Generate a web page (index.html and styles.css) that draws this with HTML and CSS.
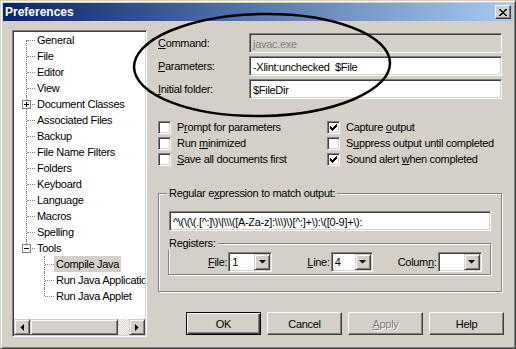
FILE: index.html
```html
<!DOCTYPE html>
<html lang="en">
<head>
    <meta charset="UTF-8">
    <title>Preferences</title>
    <link rel="stylesheet" href="styles.css">
</head>
<body>
    <div class="window">
        <div class="titlebar">
            <span class="title">Preferences</span>
            <span class="close-btn">
                <svg width="8" height="7" viewBox="0 0 8 7"><path d="M0 0h2v1h-2zM6 0h2v1h-2zM1 1h2v1h-2zM5 1h2v1h-2zM2 2h4v1h-4zM3 3h2v1h-2zM2 4h4v1h-4zM1 5h2v1h-2zM5 5h2v1h-2zM0 6h2v1h-2zM6 6h2v1h-2z" fill="#000"/></svg>
            </span>
        </div>

        <div class="main">
            <!-- category tree -->
            <div class="tree-box">
                <div class="tree-view">
                    <ul class="tree">
                        <li><span class="node">General</span></li>
                        <li><span class="node">File</span></li>
                        <li><span class="node">Editor</span></li>
                        <li><span class="node">View</span></li>
                        <li>
                            <svg class="expander" width="9" height="9" viewBox="0 0 9 9"><rect x="0.5" y="0.5" width="8" height="8" fill="#fff" stroke="#808080"/><path d="M2 4.5h5M4.5 2v5" stroke="#000"/></svg>
                            <span class="node">Document Classes</span>
                        </li>
                        <li><span class="node">Associated Files</span></li>
                        <li><span class="node">Backup</span></li>
                        <li><span class="node">File Name Filters</span></li>
                        <li><span class="node">Folders</span></li>
                        <li><span class="node">Keyboard</span></li>
                        <li><span class="node">Language</span></li>
                        <li><span class="node">Macros</span></li>
                        <li><span class="node">Spelling</span></li>
                        <li>
                            <svg class="expander" width="9" height="9" viewBox="0 0 9 9"><rect x="0.5" y="0.5" width="8" height="8" fill="#fff" stroke="#808080"/><path d="M2 4.5h5" stroke="#000"/></svg>
                            <span class="node">Tools</span>
                            <ul class="subtree">
                                <li><span class="node selected">Compile Java</span></li>
                                <li><span class="node">Run Java Application</span></li>
                                <li><span class="node">Run Java Applet</span></li>
                            </ul>
                        </li>
                    </ul>
                </div>
                <div class="hscroll">
                    <span class="sb-btn">
                        <svg width="4" height="7" viewBox="0 0 4 7"><path d="M4 0v7L0.5 3.5z" fill="#000"/></svg>
                    </span>
                    <span class="sb-thumb"></span>
                    <span class="sb-track"></span>
                    <span class="sb-btn">
                        <svg width="4" height="7" viewBox="0 0 4 7"><path d="M0 0v7L3.5 3.5z" fill="#000"/></svg>
                    </span>
                </div>
            </div>

            <!-- tool settings -->
            <div class="panel">
                <div class="form-rows">
                    <div class="form-row">
                        <span class="form-label"><u>C</u>ommand:</span>
                        <span class="field disabled">javac.exe</span>
                    </div>
                    <div class="form-row">
                        <span class="form-label"><u>P</u>arameters:</span>
                        <span class="field">-Xlint:unchecked&nbsp; $File</span>
                    </div>
                    <div class="form-row">
                        <span class="form-label"><u>I</u>nitial folder:</span>
                        <span class="field">$FileDir</span>
                    </div>
                </div>

                <div class="checks">
                    <div class="check"><span class="cb"></span><span>P<u>r</u>ompt for parameters</span></div>
                    <div class="check"><span class="cb"><svg width="7" height="7" viewBox="0 0 7 7"><path d="M6 0h1v3h-1zM5 1h1v3h-1zM4 2h1v3h-1zM3 3h1v3h-1zM2 4h1v3h-1zM1 3h1v3h-1zM0 2h1v3h-1z" fill="#000"/></svg></span><span>Capture <u>o</u>utput</span></div>
                    <div class="check"><span class="cb"></span><span>Run <u>m</u>inimized</span></div>
                    <div class="check"><span class="cb"></span><span>S<u>u</u>ppress output until completed</span></div>
                    <div class="check"><span class="cb"></span><span><u>S</u>ave all documents first</span></div>
                    <div class="check"><span class="cb"><svg width="7" height="7" viewBox="0 0 7 7"><path d="M6 0h1v3h-1zM5 1h1v3h-1zM4 2h1v3h-1zM3 3h1v3h-1zM2 4h1v3h-1zM1 3h1v3h-1zM0 2h1v3h-1z" fill="#000"/></svg></span><span>Sound alert <u>w</u>hen completed</span></div>
                </div>

                <fieldset class="group">
                    <legend>Regular e<u>x</u>pression to match output:</legend>
                    <div class="field regex">^\(\(\(.[^:]\)\|\\\([A-Za-z]:\\\)\)[^:]+\):\([0-9]+\):</div>

                    <fieldset class="group registers">
                        <legend>Registers:</legend>
                        <div class="reg-row">
                            <div class="reg reg-file">
                                <span><u>F</u>ile:</span>
                                <span class="combo"><span class="combo-val">1</span><span class="combo-btn"><svg width="7" height="4" viewBox="0 0 7 4"><path d="M0 0h7L3.5 3.5z" fill="#000"/></svg></span></span>
                            </div>
                            <div class="reg reg-line">
                                <span><u>L</u>ine:</span>
                                <span class="combo short"><span class="combo-val">4</span><span class="combo-btn"><svg width="7" height="4" viewBox="0 0 7 4"><path d="M0 0h7L3.5 3.5z" fill="#000"/></svg></span></span>
                            </div>
                            <div class="reg reg-col">
                                <span>Colum<u>n</u>:</span>
                                <span class="combo"><span class="combo-val"></span><span class="combo-btn"><svg width="7" height="4" viewBox="0 0 7 4"><path d="M0 0h7L3.5 3.5z" fill="#000"/></svg></span></span>
                            </div>
                        </div>
                    </fieldset>
                </fieldset>

                <div class="buttons">
                    <span class="btn default">OK</span>
                    <span class="btn">Cancel</span>
                    <span class="btn disabled"><u>A</u>pply</span>
                    <span class="btn">Help</span>
                </div>
            </div>
        </div>

        <!-- hand drawn highlight around the command fields -->
        <svg class="annotation" width="516" height="349" viewBox="0 0 516 349">
            <ellipse cx="261" cy="64" rx="128" ry="51" transform="rotate(-1 261 64)" fill="none" stroke="#000" stroke-width="2.5"/>
        </svg>
    </div>
</body>
</html>
```

FILE: styles.css
```css
body {
    margin: 0;
    font-family: "Liberation Sans", Arial, sans-serif;
    font-size: 11px;
    letter-spacing: -0.3px;
    color: #000;
}

u {
    text-decoration: underline;
    text-underline-offset: 1px;
}

.window {
    position: relative;
    width: 516px;
    height: 349px;
    box-sizing: border-box;
    background: #d4d0c8;
    border: 1px solid;
    border-color: #d4d0c8 #404040 #404040 #d4d0c8;
    box-shadow: inset 1px 1px #fff, inset -1px -1px #808080;
    padding: 2px;
}

/* title bar */
.titlebar {
    height: 18px;
    display: flex;
    align-items: center;
    justify-content: space-between;
    padding: 0 2px 0 2px;
    background: linear-gradient(to right, #0a246a, #a6caf0);
}

.title {
    color: #fff;
    font-weight: bold;
    font-size: 12px;
    letter-spacing: 0;
}

.close-btn {
    width: 16px;
    height: 14px;
    box-sizing: border-box;
    display: flex;
    align-items: center;
    justify-content: center;
    background: #d4d0c8;
    border: 1px solid;
    border-color: #fff #404040 #404040 #fff;
    box-shadow: inset -1px -1px #808080;
}

.main {
    display: flex;
    padding: 9px 0 0 9px;
}

/* tree */
.tree-box {
    width: 135px;
    height: 307px;
    box-sizing: border-box;
    background: #fff;
    border: 1px solid;
    border-color: #808080 #fff #fff #808080;
    box-shadow: inset 1px 1px #404040, inset -1px -1px #d4d0c8;
    padding: 1px;
    display: flex;
    flex-direction: column;
}

.tree-view {
    height: 287px;
    overflow: hidden;
}

.tree,
.subtree {
    list-style: none;
    margin: 0;
    padding: 0;
}

.tree {
    padding-left: 12px;
}

.tree li {
    position: relative;
    padding-left: 9px;
    white-space: nowrap;
}

.subtree {
    margin-left: 9px;
}

.subtree li {
    padding-left: 10px;
}

.tree li::before {
    content: "";
    position: absolute;
    left: 0;
    top: 0;
    bottom: 0;
    border-left: 1px dotted #808080;
}

.tree li:first-child::before {
    top: 8px;
}

.tree li:last-child::before {
    bottom: auto;
    height: 8px;
}

.subtree li:first-child::before {
    top: 0;
}

.tree li::after {
    content: "";
    position: absolute;
    left: 1px;
    top: 8px;
    width: 8px;
    border-top: 1px dotted #808080;
}

.subtree li::after {
    width: 9px;
}

.expander {
    position: absolute;
    left: -4px;
    top: 4px;
    z-index: 1;
}

.node {
    display: inline-block;
    height: 16px;
    line-height: 16px;
    padding: 0 2px;
}

.node.selected {
    background: #d4d0c8;
}

.hscroll {
    height: 16px;
    display: flex;
}

.sb-btn,
.sb-thumb {
    box-sizing: border-box;
    height: 16px;
    background: #d4d0c8;
    border: 1px solid;
    border-color: #d4d0c8 #404040 #404040 #d4d0c8;
    box-shadow: inset 1px 1px #fff, inset -1px -1px #808080;
}

.sb-btn {
    width: 16px;
    display: flex;
    align-items: center;
    justify-content: center;
}

.sb-thumb {
    width: 88px;
}

.sb-track {
    flex: 1;
    background: repeating-conic-gradient(#fff 0 25%, #d4d0c8 0 50%) 0 0 / 2px 2px;
}

/* right panel */
.panel {
    width: 346px;
    margin-left: 11px;
    padding-top: 3px;
}

.form-rows {
    display: flex;
    flex-direction: column;
    gap: 3px;
}

.form-row {
    display: flex;
    align-items: center;
}

.form-label {
    width: 91px;
}

.field {
    box-sizing: border-box;
    width: 253px;
    height: 20px;
    line-height: 16px;
    padding: 2px 3px;
    background: #fff;
    border: 1px solid;
    border-color: #808080 #fff #fff #808080;
    box-shadow: inset 1px 1px #404040, inset -1px -1px #d4d0c8;
    white-space: nowrap;
    overflow: hidden;
}

.field.disabled {
    background: #d4d0c8;
    color: #808080;
}

.checks {
    display: grid;
    grid-template-columns: 169px 1fr;
    grid-auto-rows: 16px;
    margin-top: 20px;
}

.check {
    display: flex;
    align-items: center;
    gap: 6px;
    white-space: nowrap;
}

.cb {
    width: 13px;
    height: 13px;
    box-sizing: border-box;
    flex: none;
    display: flex;
    align-items: center;
    justify-content: center;
    background: #fff;
    border: 1px solid;
    border-color: #808080 #fff #fff #808080;
    box-shadow: inset 1px 1px #404040, inset -1px -1px #d4d0c8;
}

/* group boxes */
.group {
    margin: 20px 2px 0 0;
    padding: 3px 10px 16px 10px;
    border: 1px solid #808080;
    box-shadow: inset 1px 1px #fff, 1px 1px #fff;
    min-width: 0;
}

.group legend {
    padding: 0 2px;
    margin-left: -2px;
    line-height: 13px;
    background: #d4d0c8;
}

.field.regex {
    width: 100%;
    margin-top: 8px;
}

.group.registers {
    margin: 6px 0 0 -1px;
    padding: 2px 0 2px 0;
}

.reg-row {
    display: flex;
    align-items: center;
}

.reg {
    display: flex;
    align-items: center;
    gap: 1px;
}

.reg-file {
    margin-left: 39px;
}

.reg-line {
    margin-left: 35px;
}

.reg-col {
    margin-left: 25px;
}

.combo {
    box-sizing: border-box;
    width: 44px;
    height: 20px;
    display: flex;
    background: #fff;
    border: 1px solid;
    border-color: #808080 #fff #fff #808080;
    box-shadow: inset 1px 1px #404040, inset -1px -1px #d4d0c8;
    padding: 1px;
}

.combo.short {
    width: 42px;
}

.combo-val {
    flex: 1;
    padding-left: 2px;
    line-height: 16px;
}

.combo-btn {
    box-sizing: border-box;
    width: 16px;
    height: 16px;
    display: flex;
    align-items: center;
    justify-content: center;
    background: #d4d0c8;
    border: 1px solid;
    border-color: #d4d0c8 #404040 #404040 #d4d0c8;
    box-shadow: inset 1px 1px #fff, inset -1px -1px #808080;
}

/* buttons */
.buttons {
    display: flex;
    justify-content: flex-end;
    gap: 6px;
    margin-top: 20px;
}

.btn {
    box-sizing: border-box;
    width: 75px;
    height: 23px;
    display: flex;
    align-items: center;
    justify-content: center;
    border: 1px solid;
    border-color: #fff #404040 #404040 #fff;
    box-shadow: inset -1px -1px #808080;
}

.btn.default {
    border-color: #000;
    box-shadow: inset 1px 1px #fff, inset -1px -1px #404040, inset -2px -2px #808080;
}

.btn.disabled {
    color: #808080;
    text-shadow: 1px 1px #fff;
}

.annotation {
    position: absolute;
    left: 0;
    top: 0;
    pointer-events: none;
}
```
